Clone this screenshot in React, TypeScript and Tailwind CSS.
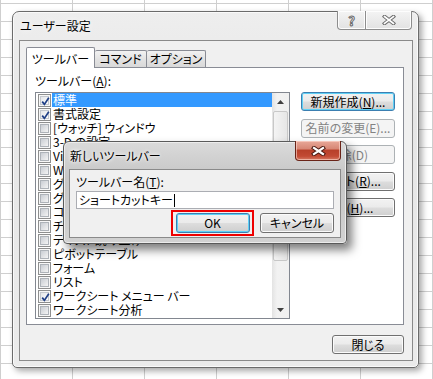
import React from 'react';

const items: [string, boolean][] = [
  ['標準', true],
  ['書式設定', true],
  ['[ウォッチ] ウィンドウ', false],
  ['3-D の設定', false],
  ['Visual Basic', false],
  ['Web', false],
  ['グラフ', false],
  ['グラフ メニュー バー', false],
  ['コントロール ツールボックス', false],
  ['チャート', false],
  ['テキスト読み上げ', false],
  ['ピボットテーブル', false],
  ['フォーム', false],
  ['リスト', false],
  ['ワークシート メニュー バー', true],
  ['ワークシート分析', false],
];

function CheckBox({ checked }: { checked: boolean }) {
  return (
    <span className="relative flex h-[13px] w-[13px] shrink-0 items-center justify-center border border-[#8e8f8f] bg-[#f7f7f7]">
      <span
        className={
          checked
            ? 'h-[9px] w-[9px] border border-[#c4c8ce] bg-[linear-gradient(135deg,#e4e6e9,#fdfdfd)]'
            : 'h-[9px] w-[9px] border border-[#aeb3b9] bg-[linear-gradient(135deg,#c9cdd3,#f4f4f4)]'
        }
      />
      {checked && (
        <svg className="absolute left-[1px] top-[1px]" width="11" height="11" viewBox="0 0 11 11">
          <path d="M2.2 5.6 L4.4 8.4 L8.8 1.8" fill="none" stroke="#1f3f86" strokeWidth="1.7" />
        </svg>
      )}
    </span>
  );
}

function Btn({
  children,
  kind = 'normal',
  className = '',
}: {
  children: React.ReactNode;
  kind?: 'normal' | 'focused' | 'disabled';
  className?: string;
}) {
  const base =
    'flex items-center justify-center rounded-[3px] border text-[12px] leading-[14px] ';
  const style =
    kind === 'focused'
      ? 'border-[#3c7fb1] text-black shadow-[inset_0_0_0_1px_#5fd0f5] bg-[linear-gradient(to_bottom,#f2f2f2_0%,#ebebeb_48%,#dddddd_52%,#cfcfcf_100%)]'
      : kind === 'disabled'
      ? 'border-[#adb2b5] text-[#838383] bg-[#f4f4f4]'
      : 'border-[#707070] text-black shadow-[inset_0_0_0_1px_#fbfbfb] bg-[linear-gradient(to_bottom,#f2f2f2_0%,#ebebeb_48%,#dddddd_52%,#cfcfcf_100%)]';
  return <div className={base + style + ' ' + className}>{children}</div>;
}

export default function App() {
  return (
    <div className="relative h-[379px] w-[433px] overflow-hidden bg-white bg-[linear-gradient(to_right,#cfcfcf_1px,transparent_1px),linear-gradient(to_bottom,#cfcfcf_1px,transparent_1px)] bg-[size:72px_18px] bg-[position:0_3px] font-['Noto_Sans_CJK_JP','Noto_Sans',sans-serif] text-[12px] leading-[14px] text-black [font-feature-settings:'palt']">
      {/* Main dialog */}
      <div className="absolute left-[12px] top-[11px] flex h-[357px] w-[407px] flex-col rounded-t-[7px] rounded-b-[5px] border border-[#6b6b6b] bg-[linear-gradient(to_bottom,#eeeeee,#e6e6e6_30%,#ebebeb)] pl-[6px] pr-[5px] pb-[6px] shadow-[inset_0_0_0_1px_#fafafa,3px_3px_6px_rgba(0,0,0,0.35)]">
        {/* title bar */}
        <div className="flex h-[28px] items-start justify-between">
          <div className="pl-[1px] pt-[7px] text-[12px] leading-[14px] [text-shadow:0_0_6px_#fff]">ユーザー設定</div>
          <div className="-mt-px mr-[1px] flex h-[19px]">
            <div className="flex h-[19px] w-[29px] items-center justify-center rounded-bl-[4px] border border-t-0 border-[#8d8d8d] bg-[linear-gradient(to_bottom,#f4f4f4,#e2e2e2)] shadow-[inset_0_0_0_1px_#fdfdfd]">
              <span className="text-[13px] font-bold leading-[13px] text-white [-webkit-text-stroke:1px_#6a6a6a]">?</span>
            </div>
            <div className="-ml-px flex h-[19px] w-[47px] items-center justify-center rounded-br-[4px] border border-t-0 border-[#8d8d8d] bg-[linear-gradient(to_bottom,#f4f4f4,#e2e2e2)] shadow-[inset_0_0_0_1px_#fdfdfd]">
              <svg width="14" height="10" viewBox="0 0 14 10">
                <path d="M2.5 1.5 L11.5 8.5 M11.5 1.5 L2.5 8.5" stroke="#6e6e6e" strokeWidth="3.6" strokeLinecap="square" />
                <path d="M2.5 1.5 L11.5 8.5 M11.5 1.5 L2.5 8.5" stroke="#ffffff" strokeWidth="1.6" strokeLinecap="square" />
              </svg>
            </div>
          </div>
        </div>
        {/* client */}
        <div className="flex h-[321px] flex-col border border-[#8a8a8a] bg-[#f0f0f0] pl-[6px] pr-[8px] pt-[6px]">
          {/* tabs */}
          <div className="flex h-[20px] items-end">
            <div className="relative z-10 -mb-px flex h-[21px] w-[69px] items-start justify-center rounded-t-[2px] border border-b-0 border-[#898c95] bg-white pt-[4px]">
              ツールバー
            </div>
            <div className="flex h-[17px] w-[52px] items-center justify-center rounded-t-[2px] border border-b-0 border-l-0 border-[#898c95] bg-[linear-gradient(to_bottom,#f2f2f2,#e3e3e3_50%,#d9d9d9)]">
              コマンド
            </div>
            <div className="flex h-[17px] w-[59px] items-center justify-center rounded-t-[2px] border border-b-0 border-l-0 border-[#898c95] bg-[linear-gradient(to_bottom,#f2f2f2,#e3e3e3_50%,#d9d9d9)]">
              オプション
            </div>
          </div>
          {/* panel */}
          <div className="flex h-[258px] w-[378px] border border-[#898c95] bg-white pl-[8px]">
            <div className="flex flex-col pt-[6px]">
              <div className="h-[14px]">
                ツールバー(<span className="underline underline-offset-[1px]">A</span>):
              </div>
              <div className="mt-[4px] flex h-[227px] w-[255px] border border-[#828790] bg-white">
                <div className="flex w-[236px] flex-col">
                  {items.map(([name, checked], i) => (
                    <div key={i} className="flex h-[14px] items-center pl-[2px]">
                      <CheckBox checked={checked} />
                      <div
                        className={
                          i === 0
                            ? 'ml-[1px] h-[14px] flex-1 whitespace-nowrap bg-[#3399ff] pl-[1px] text-white'
                            : 'ml-[1px] h-[14px] flex-1 whitespace-nowrap pl-[1px]'
                        }
                      >
                        {name}
                      </div>
                    </div>
                  ))}
                </div>
                {/* scrollbar */}
                <div className="flex w-[17px] flex-col bg-[linear-gradient(to_right,#e3e3e3,#f2f2f2_30%,#f0f0f0)]">
                  <div className="flex h-[17px] items-center justify-center">
                    <svg width="7" height="4" viewBox="0 0 7 4">
                      <path d="M0 4 L3.5 0 L7 4 Z" fill="#404040" />
                    </svg>
                  </div>
                  <div className="mx-[1px] mt-[1px] h-[150px] rounded-[2px] border border-[#c8c8c8] bg-[linear-gradient(to_right,#f4f4f4,#e6e6e6)]" />
                  <div className="flex-1" />
                  <div className="flex h-[17px] items-center justify-center">
                    <svg width="7" height="4" viewBox="0 0 7 4">
                      <path d="M0 0 L3.5 4 L7 0 Z" fill="#404040" />
                    </svg>
                  </div>
                </div>
              </div>
            </div>
            {/* right buttons */}
            <div className="ml-[11px] mt-[24px] flex flex-col gap-[7.5px]">
              <Btn kind="focused" className="h-[19px] w-[94px]">
                新規作成(<span className="underline underline-offset-[1px]">N</span>)...
              </Btn>
              <Btn kind="disabled" className="h-[19px] w-[94px]">
                名前の変更(E)...
              </Btn>
              <Btn kind="disabled" className="h-[19px] w-[94px]">
                削除(D)
              </Btn>
              <Btn className="h-[19px] w-[94px]">
                リセット(<span className="underline underline-offset-[1px]">R</span>)...
              </Btn>
              <Btn className="h-[19px] w-[94px]">
                添付(<span className="underline underline-offset-[1px]">H</span>)...
              </Btn>
            </div>
          </div>
          <div className="mt-[10px] flex justify-end">
            <Btn className="h-[19px] w-[72px]">閉じる</Btn>
          </div>
        </div>
      </div>

      {/* Modal dialog */}
      <div className="absolute left-[63px] top-[141px] flex h-[103px] w-[284px] flex-col rounded-t-[6px] rounded-b-[4px] border border-[#5a5a5a] bg-[linear-gradient(to_bottom,#dadada,#c6c6c6_35%,#cbcbcb_70%,#d2d2d2)] px-[5px] pb-[5px] shadow-[inset_0_0_0_1px_#ececec,5px_6px_10px_rgba(0,0,0,0.5)]">
        <div className="flex h-[27px] items-start justify-between">
          <div className="pl-[1px] pt-[7px] text-[12px] leading-[14px] [text-shadow:0_0_5px_#fff,0_0_3px_#fff]">新しいツールバー</div>
          <div className="-mt-px flex h-[20px] w-[46px] items-center justify-center rounded-b-[4px] border border-t-0 border-[#6a2418] bg-[linear-gradient(to_bottom,#e8a898_0%,#d88876_40%,#b8402a_50%,#c24a34_80%,#d67a64_100%)] shadow-[inset_0_0_0_1px_rgba(255,220,210,0.6)]">
            <svg width="15" height="10" viewBox="0 0 15 10">
              <path d="M3 2 L12 8 M12 2 L3 8" stroke="#4a1a12" strokeWidth="4.2" strokeLinecap="square" />
              <path d="M3 2 L12 8 M12 2 L3 8" stroke="#ffffff" strokeWidth="2.2" strokeLinecap="square" />
            </svg>
          </div>
        </div>
        <div className="flex h-[69px] flex-col border border-[#8a8a8a] bg-[#f0f0f0] pl-[6px] pr-[6px] pt-[5px]">
          <div className="h-[14px]">
            ツールバー名(<span className="underline underline-offset-[1px]">T</span>):
          </div>
          <div className="mt-[2px] flex h-[18px] w-[258px] items-center border border-[#abadb3] bg-white pl-[2px]">
            ショートカットキー<span className="ml-px inline-block h-[13px] w-px bg-black" />
          </div>
          <div className="mt-px flex w-[258px] items-center justify-end gap-[6px]">
            <div className="flex h-[26px] w-[83px] items-center justify-center border-2 border-[#ee0000]">
              <Btn kind="focused" className="h-[20px] w-[74px]">
                OK
              </Btn>
            </div>
            <Btn className="h-[20px] w-[74px]">キャンセル</Btn>
          </div>
        </div>
      </div>
    </div>
  );
}
